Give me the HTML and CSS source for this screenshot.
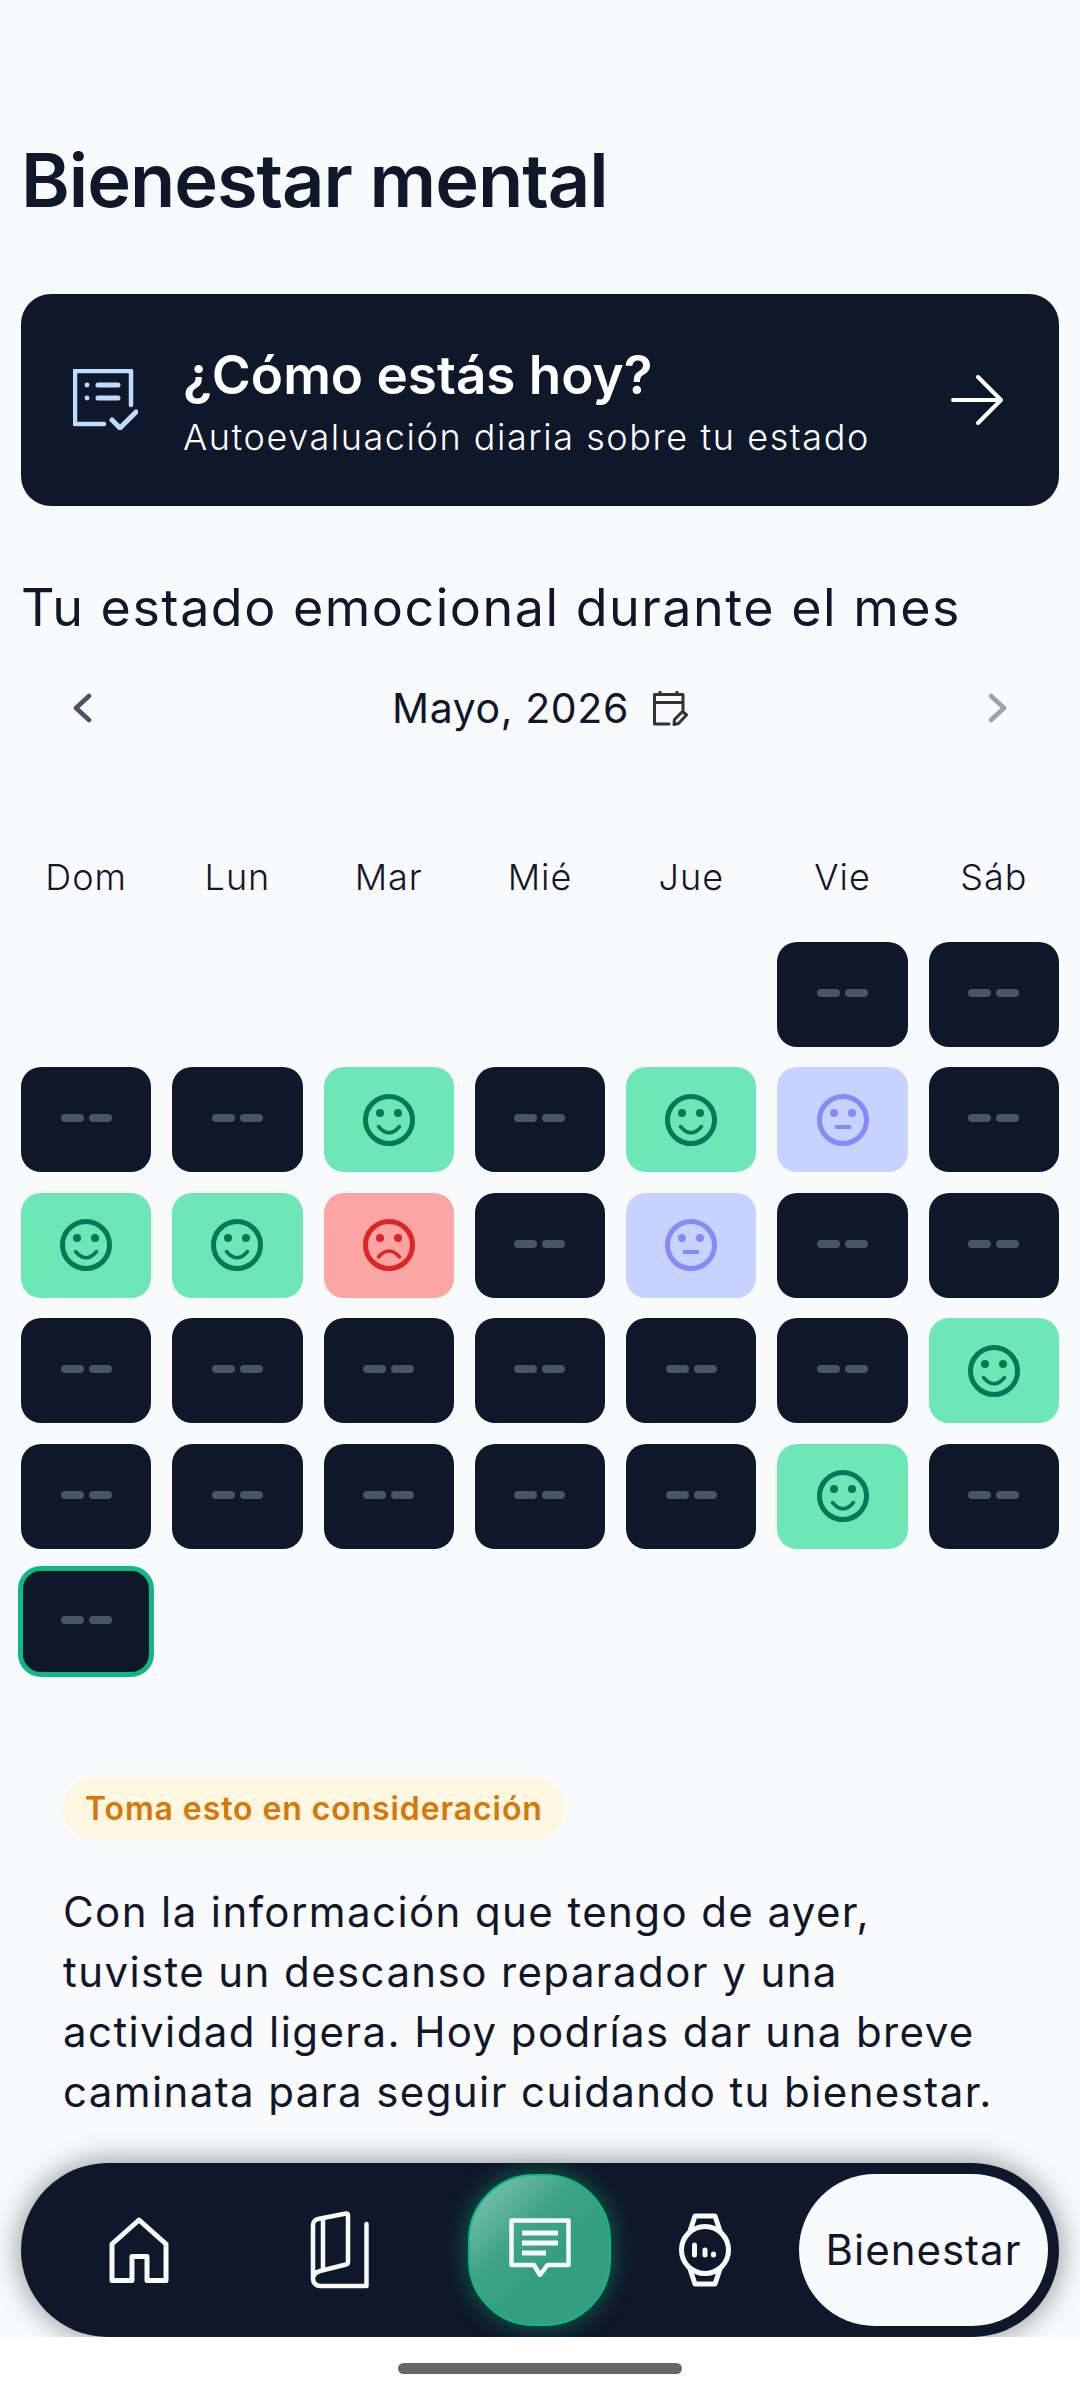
FILE: index.html
```html
<!DOCTYPE html>
<html lang="es">
<head>
    <meta charset="UTF-8">
    <meta name="viewport" content="width=device-width, initial-scale=1.0">
    <title>Bienestar mental</title>
    <link rel="stylesheet" href="styles.css">
</head>
<body>
    <svg class="sprites" width="0" height="0">
        <symbol id="face-happy" viewBox="0 0 52 52">
            <circle cx="26" cy="26" r="23.5" fill="none" stroke="currentColor" stroke-width="5"/>
            <circle cx="17" cy="19" r="4" fill="currentColor"/>
            <circle cx="35" cy="19" r="4" fill="currentColor"/>
            <path d="M15.5 32.5Q26 45 36.5 32.5" fill="none" stroke="currentColor" stroke-width="3.5" stroke-linecap="round"/>
        </symbol>
        <symbol id="face-sad" viewBox="0 0 52 52">
            <circle cx="26" cy="26" r="23.5" fill="none" stroke="currentColor" stroke-width="5"/>
            <circle cx="17" cy="19" r="4" fill="currentColor"/>
            <circle cx="35" cy="19" r="4" fill="currentColor"/>
            <path d="M15.5 38Q26 26 36.5 38" fill="none" stroke="currentColor" stroke-width="3.5" stroke-linecap="round"/>
        </symbol>
        <symbol id="face-neutral" viewBox="0 0 52 52">
            <circle cx="26" cy="26" r="23.5" fill="none" stroke="currentColor" stroke-width="5"/>
            <circle cx="17" cy="19" r="4" fill="currentColor"/>
            <circle cx="35" cy="19" r="4" fill="currentColor"/>
            <path d="M18 33H34" fill="none" stroke="currentColor" stroke-width="4"/>
        </symbol>
    </svg>

    <div class="page">
        <main class="content">
            <h1 class="title">Bienestar mental</h1>

            <a class="check-card">
                <svg class="check-icon" width="65" height="61" viewBox="0 0 65 61" fill="none" stroke="#bfdbfe" stroke-width="4.5" stroke-linecap="round" stroke-linejoin="round">
                    <path d="M58 36V2H2V55H31"/>
                    <path d="M39 51L47 59L63 43" stroke-width="5"/>
                    <path d="M25 16H45M25 29H45" stroke-width="5"/>
                    <circle cx="14" cy="16" r="2.4" fill="#bfdbfe" stroke="none"/>
                    <circle cx="14" cy="29" r="2.4" fill="#bfdbfe" stroke="none"/>
                </svg>
                <div class="check-text">
                    <div class="check-title">¿Cómo estás hoy?</div>
                    <div class="check-sub">Autoevaluación diaria sobre tu estado</div>
                </div>
                <svg class="check-arrow" width="52" height="50" viewBox="0 0 52 50" fill="none" stroke="#fff" stroke-width="4" stroke-linecap="round" stroke-linejoin="round">
                    <path d="M2 25H50M27 2L50 25L27 48"/>
                </svg>
            </a>

            <h2 class="section-title">Tu estado emocional durante el mes</h2>

            <div class="month-bar">
                <svg width="19" height="30" viewBox="0 0 19 30" fill="none" stroke="#475569" stroke-width="4.5" stroke-linecap="round" stroke-linejoin="round">
                    <path d="M16 3L3 15L16 27"/>
                </svg>
                <div class="month-label">
                    <span>Mayo, 2026</span>
                    <svg width="35" height="35" viewBox="0 0 35 35" fill="none" stroke="#333" stroke-width="3" stroke-linecap="round" stroke-linejoin="round">
                        <path d="M30 19V3.500H1.500V33H16M1.500 11.500H30M7 1V3.500M24 1V3.500"/>
                        <path d="M21 33.500L21.500 28.500L29.500 20.500L33.500 24L25.500 32.500Z"/>
                    </svg>
                </div>
                <svg width="19" height="30" viewBox="0 0 19 30" fill="none" stroke="#9ca3af" stroke-width="4.5" stroke-linecap="round" stroke-linejoin="round">
                    <path d="M3 3L16 15L3 27"/>
                </svg>
            </div>

            <div class="week-head">
                <span>Dom</span><span>Lun</span><span>Mar</span><span>Mié</span><span>Jue</span><span>Vie</span><span>Sáb</span>
            </div>

            <div class="days">
                <div class="day-empty"></div>
                <div class="day-empty"></div>
                <div class="day-empty"></div>
                <div class="day-empty"></div>
                <div class="day-empty"></div>
                <div class="day"><i></i><i></i></div>
                <div class="day"><i></i><i></i></div>

                <div class="day"><i></i><i></i></div>
                <div class="day"><i></i><i></i></div>
                <div class="day happy"><svg width="52" height="52"><use href="#face-happy"/></svg></div>
                <div class="day"><i></i><i></i></div>
                <div class="day happy"><svg width="52" height="52"><use href="#face-happy"/></svg></div>
                <div class="day neutral"><svg width="52" height="52"><use href="#face-neutral"/></svg></div>
                <div class="day"><i></i><i></i></div>

                <div class="day happy"><svg width="52" height="52"><use href="#face-happy"/></svg></div>
                <div class="day happy"><svg width="52" height="52"><use href="#face-happy"/></svg></div>
                <div class="day sad"><svg width="52" height="52"><use href="#face-sad"/></svg></div>
                <div class="day"><i></i><i></i></div>
                <div class="day neutral"><svg width="52" height="52"><use href="#face-neutral"/></svg></div>
                <div class="day"><i></i><i></i></div>
                <div class="day"><i></i><i></i></div>

                <div class="day"><i></i><i></i></div>
                <div class="day"><i></i><i></i></div>
                <div class="day"><i></i><i></i></div>
                <div class="day"><i></i><i></i></div>
                <div class="day"><i></i><i></i></div>
                <div class="day"><i></i><i></i></div>
                <div class="day happy"><svg width="52" height="52"><use href="#face-happy"/></svg></div>

                <div class="day"><i></i><i></i></div>
                <div class="day"><i></i><i></i></div>
                <div class="day"><i></i><i></i></div>
                <div class="day"><i></i><i></i></div>
                <div class="day"><i></i><i></i></div>
                <div class="day happy"><svg width="52" height="52"><use href="#face-happy"/></svg></div>
                <div class="day"><i></i><i></i></div>

                <div class="day today"><i></i><i></i></div>
            </div>

            <div class="advice">
                <span class="advice-tag">Toma esto en consideración</span>
                <p class="advice-text">Con la información que tengo de ayer,<br>tuviste un descanso reparador y una<br>actividad ligera. Hoy podrías dar una breve<br>caminata para seguir cuidando tu bienestar.</p>
            </div>
        </main>

        <nav class="tabbar">
            <svg class="tab-home" width="60" height="66" viewBox="0 0 60 66" fill="none" stroke="#f8fafc" stroke-width="5" stroke-linejoin="round">
                <path d="M3 27L30 3L57 27V63.500H38V39.500H23V63.500H3Z"/>
            </svg>
            <svg class="tab-book" width="60" height="78" viewBox="0 0 60 78" fill="none" stroke="#f8fafc" stroke-width="4.500" stroke-linecap="round" stroke-linejoin="round">
                <path d="M56.500 13V75H10A7 7 0 0 1 3 68V14A6 6 0 0 1 8 8L36 2.500Q38 2.500 38 4.500V51Q38 53 36 53.500L10 60Q3 62 3 68"/>
                <path d="M13 8V59"/>
            </svg>
            <div class="tab-chat">
                <svg width="62" height="59" viewBox="0 0 62 59" fill="none" stroke="#f8fafc" stroke-width="4.500" stroke-linejoin="round">
                    <path d="M2.500 2.500H59.500V47H38.500L31 57L25 47H2.500Z"/>
                    <path d="M13 15H49M13 25H49M13 35H37" stroke-width="5"/>
                </svg>
            </div>
            <svg class="tab-watch" width="52" height="74" viewBox="0 0 52 74" fill="none" stroke="#f8fafc" stroke-width="5" stroke-linecap="round" stroke-linejoin="round">
                <circle cx="26" cy="37" r="23.500"/>
                <path d="M11 18L16 3H36L41 18M11 56L16 71H36L41 56"/>
                <path d="M15.500 32V42M26 37V42M34.500 41V42" stroke-width="5"/>
            </svg>
            <div class="tab-active">Bienestar</div>
        </nav>

        <div class="gesture-bar"><div class="gesture-pill"></div></div>
    </div>
</body>
</html>
```

FILE: styles.css
```css
* { box-sizing: border-box; }
html, body { margin: 0; padding: 0; }
body { width: 1080px; height: 2400px; overflow: hidden; font-family: Inter, "Noto Sans", sans-serif; color: #0f172a; background: #f9fafc; }
.sprites { position: absolute; }
.page { height: 2400px; display: flex; flex-direction: column; }
.content { flex: 1; min-height: 0; padding: 0 21px; overflow: hidden; }

.title { margin: 140px 0 0; font-size: 74px; line-height: 80px; font-weight: 600; letter-spacing: -1px; }

.check-card { display: flex; align-items: center; height: 212px; margin-top: 74px; padding: 0 56px 0 52px; background: #0f172a; border-radius: 30px; color: #fff; }
.check-icon { flex: none; margin-top: -2px; }
.check-text { flex: 1; margin-left: 45px; padding-top: 3px; }
.check-title { font-size: 53px; line-height: 62px; font-weight: 600; }
.check-sub { font-size: 36px; line-height: 46px; font-weight: 300; letter-spacing: 1.56px; margin-top: 8px; }
.check-arrow { flex: none; }

.section-title { margin: 72px 0 0; font-size: 52px; line-height: 60px; font-weight: 400; letter-spacing: 1.5px; }

.month-bar { display: flex; align-items: center; justify-content: space-between; height: 50px; margin-top: 45px; padding: 0 52px; }
.month-label { display: flex; align-items: center; gap: 24px; font-size: 41px; font-weight: 400; letter-spacing: 0.6px; }

.week-head { display: grid; grid-template-columns: repeat(7, 1fr); column-gap: 21px; margin-top: 121px; font-size: 36px; line-height: 46px; font-weight: 300; letter-spacing: 1px; text-align: center; }

.days { display: grid; grid-template-columns: repeat(7, 1fr); grid-auto-rows: 105px; gap: 20.4px 21px; margin-top: 42px; }
.day { display: flex; align-items: center; justify-content: center; gap: 5px; border-radius: 20px; background: #0f172a; }
.day i { width: 23px; height: 8px; margin-top: -3px; border-radius: 4px; background: #475569; }
.happy { background: #6ee7b7; color: #047857; }
.sad { background: #fca5a5; color: #dc2626; }
.neutral { background: #c7d2fe; color: #818cf8; }
.today { outline: 5.5px solid #10b981; outline-offset: -2.5px; }

.advice { margin-top: 103px; padding: 0 21px 0 42px; }
.advice-tag { display: inline-block; height: 63px; padding: 0 22px; border-radius: 32px; background: #fdf6e0; color: #d97706; font-size: 32px; line-height: 63px; font-weight: 600; letter-spacing: 0.9px; }
.advice-text { margin: 42px 0 0; font-size: 42px; line-height: 60px; letter-spacing: 1.4px; white-space: nowrap; }

.tabbar { flex: none; display: flex; align-items: center; height: 174px; margin: 0 21px; padding-right: 11px; background: #0f172a; border-radius: 87px; box-shadow: 0 0 30px rgba(0, 0, 0, 0.45); }
.tab-home { flex: none; margin-left: 88px; }
.tab-book { flex: none; margin-left: 141px; }
.tab-chat { flex: none; display: flex; align-items: center; justify-content: center; width: 143px; height: 152px; margin-left: 98px; padding-bottom: 6px; border: 2px solid #10b981; border-radius: 66px; background: linear-gradient(135deg, #85c9b2 0%, #3ea388 38%, #349e80 60%); box-shadow: 0 0 24px rgba(16, 185, 129, 0.5); }
.tab-watch { flex: none; margin-left: 68px; }
.tab-active { flex: none; width: 249px; height: 152px; margin-left: 68px; border-radius: 76px; background: #f9fafc; font-size: 42px; line-height: 152px; letter-spacing: 1px; text-align: center; }

.gesture-bar { flex: none; position: relative; height: 63px; background: #fff; padding-top: 26px; }
.gesture-pill { width: 284px; height: 11px; margin: 0 auto; border-radius: 6px; background: #666; }
```
